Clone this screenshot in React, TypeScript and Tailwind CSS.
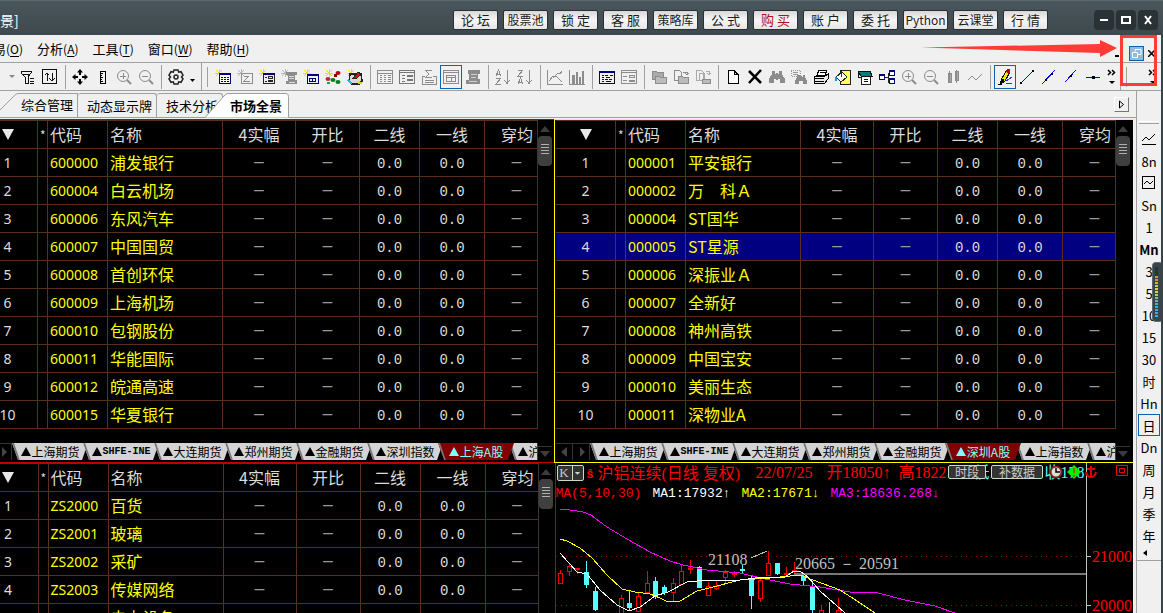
import type { ReactNode } from "react";
import { clsx } from "clsx";

/* ------------------------------------------------------------------ data */

const TITLE_LINKS = ["论 坛", "股票池", "锁 定", "客 服", "策略库", "公 式", "购 买", "账 户", "委 托", "Python", "云课堂", "行 情"];

const MENUS = [
  { label: "易", hotkey: "O" },
  { label: "分析", hotkey: "A" },
  { label: "工具", hotkey: "T" },
  { label: "窗口", hotkey: "W" },
  { label: "帮助", hotkey: "H" },
];

const SHANGHAI = [
  ["600000", "浦发银行"],
  ["600004", "白云机场"],
  ["600006", "东风汽车"],
  ["600007", "中国国贸"],
  ["600008", "首创环保"],
  ["600009", "上海机场"],
  ["600010", "包钢股份"],
  ["600011", "华能国际"],
  ["600012", "皖通高速"],
  ["600015", "华夏银行"],
];

const SHENZHEN = [
  ["000001", "平安银行"],
  ["000002", "万　科Ａ"],
  ["000004", "ST国华"],
  ["000005", "ST星源"],
  ["000006", "深振业Ａ"],
  ["000007", "全新好"],
  ["000008", "神州高铁"],
  ["000009", "中国宝安"],
  ["000010", "美丽生态"],
  ["000011", "深物业A"],
];

const SECTORS = [
  ["ZS2000", "百货"],
  ["ZS2001", "玻璃"],
  ["ZS2002", "采矿"],
  ["ZS2003", "传媒网络"],
  ["ZS2004", "电力设备"],
];

const LEFT_MARKETS = ["上海期货", "SHFE-INE", "大连期货", "郑州期货", "金融期货", "深圳指数", "上海A股", "沪期期权"];
const RIGHT_MARKETS = ["上海期货", "SHFE-INE", "大连期货", "郑州期货", "金融期货", "深圳A股", "上海指数", "沪期期权"];

/* ----------------------------------------------------------------- icons */

const G = "#8c8c8c";
const NAVY = "#000080";

const spark = <path d="M4 0v8M0 4h8M1 1l6 6M7 1L1 7" stroke="#e8e000" />;
const sparkOff = <path d="M4 0v8M0 4h8M1 1l6 6M7 1L1 7" stroke="#b8b8b8" />;
const magnifier = (
  <>
    <circle cx="7" cy="7" r="5.5" stroke={G} shapeRendering="auto" />
    <path d="M11 11l4 4" stroke={G} strokeWidth="2" shapeRendering="auto" />
  </>
);
const binoculars = (c: string) => (
  <path d="M3 2h3v3h1V4h2v1h1V2h3v3l3 5v4h-5v-4H9v1H7v-1H5v4H0v-4l3-5z" fill={c} stroke="none" />
);

const ICONS: Record<string, ReactNode> = {
  filter: <path d="M1 2h10v2L8 8v6H5V8L1 4zM10 9h4M10 12h4M10 14.500h4M3 5h6" stroke="#111" />,
  updown: <path d="M.5.5h14v14H.5zM5 12V4M2.500 6.500L5 4l2.500 2.500M10 4v8M7.500 9.500L10 12l2.500-2.500" stroke="#111" />,
  move: (
    <g fill="#000" stroke="none" shapeRendering="auto">
      <path d="M8 0l3 3.500H9V6H7V3.500H5zM8 16l3-3.500H9V10H7v2.500H5zM0 8l3.500-3v2H6v2H3.500v2zM16 8l-3.500-3v2H10v2h2.500v2z" />
    </g>
  ),
  ruler: <path d="M6 2h5v12H6zM6 4h3M6 6h2M6 8h3M6 10h2M6 12h3" stroke="#000" />,
  zoomIn: <>{magnifier}<path d="M4 7h6M7 4v6" stroke={G} /></>,
  zoomOut: <>{magnifier}<path d="M4 7h6" stroke={G} /></>,
  gear: (
    <g stroke="#222" strokeWidth="1.500" shapeRendering="auto">
      <path d="M6 1h4l.7 2.200 2.300-.5 2 3.400L13.500 8l1.500 1.900-2 3.400-2.300-.5L10 15H6l-.7-2.200-2.300.5-2-3.400L2.500 8 1 6.100l2-3.400 2.300.5z" />
      <circle cx="8" cy="8" r="2" />
    </g>
  ),
  newList: <>{spark}<path d="M4 4.500h11v10H4z" stroke={NAVY} fill="#fff" /><path d="M4 4h12v2H4z" fill={NAVY} stroke="none" /><path d="M6 8h2M9 8h2M12 8h2M6 10h2M9 10h2M12 10h2M6 12h2M9 12h2M12 12h2" stroke={NAVY} /></>,
  newZ: <>{sparkOff}<path d="M4 4.500h11v10H4zM7 7h5l-5 5h6" stroke={G} /></>,
  newForm: <>{spark}<path d="M4 4.500h11v10H4zM9 7.500h4v2H9zM9 11.500h4v1H9zM6 8h2M6 12h2" stroke="#222" /><path d="M4 4h12v2H4z" fill={NAVY} stroke="none" /></>,
  newScroll: <>{sparkOff}<path d="M5 3h11v3h-2v5h2v4H5v-3h2V6H5z" fill={G} stroke="none" /><path d="M8 7h5M8 9h5M8 13h6" stroke="#ddd" /></>,
  newWindow: <>{spark}<path d="M4 5.500h11v9H4zM6.500 9.500h6v3h-6zM9.500 9v4" stroke={NAVY} /><path d="M4 5h12v2H4z" fill={NAVY} stroke="none" /></>,
  palette: <>{spark}<g stroke="none" shapeRendering="auto"><ellipse cx="13" cy="4" rx="2.500" ry="2" fill="#c00010" /><path d="M9 5h3v3H9z" fill="#800" /><ellipse cx="3" cy="10" rx="2.500" ry="2" fill="#d02020" /><ellipse cx="8" cy="11" rx="2.500" ry="2" fill="#008020" /><ellipse cx="13" cy="13" rx="2.500" ry="2" fill="#008020" /><path d="M2 13h3v2H2z" fill="#00b040" /></g></>,
  alarm: <>{spark}<path d="M3 5h11l1 7-3 3H5l-3-3z" fill="#d8d8d8" stroke="#222" strokeWidth="1.500" /><path d="M6 9l5-6 3 2-4 4z" fill="#e01010" stroke="#222" /><path d="M1 11l4 4" stroke="#00c8d8" strokeWidth="2" /><path d="M11 14h4" stroke="#e0d000" strokeWidth="2" /></>,
  grid: <path d="M.5 1.500h15v13H.5zM.5 4h15M3 6h2M7 6h2M11 6h3M3 8h2M7 8h2M11 8h3M3 10h2M7 10h2M11 10h3M3 12h2M7 12h2M11 12h3" stroke={G} />,
  form: <path d="M.5 1.500h15v13H.5zM.5 3.500h15M3 6h3M3 9h3M3 12h3M8.500 6.500h5v1h-5zM8.500 10.500h5v1h-5z" stroke="#777" />,
  sigma: <path d="M1 7h3M12 7h3v8H1V7M11 1.500H5L8 5 5 8.500h6M4 11h9M4 13h9" stroke={G} />,
  layout: <path d="M.5 1.500h15v13H.5zM.5 3.500h15M3.500 6.500h9v2h-9zM3.500 9v3h9V9M8.500 9v3" stroke={G} />,
  scroll: <><path d="M3 1h12v4h-2v5h2v5H1v-4h3V5H3z" fill={G} stroke="none" /><path d="M6 5h6M6 8h5M4 12h8" stroke="#d0d0d0" /></>,
  sortAZ: <path d="M1 7l2.500-6L6 7M2 5h3M1 9h5l-5 6h5M12 1v13M9.500 11l2.500 3.500 2.500-3.500" stroke={G} />,
  sortZA: <path d="M1 1h5L1 7h5M1 15l2.500-6L6 15M2 13h3M12 1v13M9.500 11l2.500 3.500 2.500-3.500" stroke={G} />,
  chartLine: <path d="M.5 1v14H16M2 12l4-5h3l6 6M6 9l5-5 2 1 2-3" stroke={G} />,
  chartBar: <><path d="M.5 1v14H16" stroke={G} /><path d="M3 6h3v9H3zM7 3h2v12H7zM10 8h2v7h-2zM13 2h2v13h-2z" fill={G} stroke="none" /></>,
  tableBlue: <><path d="M.5 2.500h15v12H.5z" stroke="#111" /><path d="M0 2h16v2H0z" fill={NAVY} stroke="none" /><path d="M3 6h2M6 6h3M11 6h3M3 8h2M7 8h4M3 10h2M6 10h3M10 10h3M3 12h2M7 12h5" stroke="#111" /></>,
  tableGray: <path d="M.5 1.500h15v13H.5zM.5 3.500h15M2 7h4M2 11h4M8.500 6.500h5v2h-5zM8.500 11.500h5v1h-5z" stroke={G} />,
  folders: <><path d="M1 2h4l1 1h6v7H1z" fill="#aaa" stroke={G} /><path d="M4 7h4l1 1h6v6H4z" fill="#bbb" stroke={G} /></>,
  folderUp: <><path d="M1 1h5l2 2v8H1zM10 3h4v3M12 4l2 2 2-2" stroke={G} /><path d="M5 7h4l1 1h5v6H5z" fill="#bbb" stroke={G} /></>,
  folderDown: <><path d="M1 1h5l2 2v8H1zM4 4h5v7H4zM11 2h3v4M12 4l2 2 2-2" stroke="#aaa" /><path d="M7 10h8v4H7z" fill="#bbb" stroke={G} /></>,
  page: <path d="M3 1.500h6l4 4v9H3zM9 1.500v4h4" stroke="#000" fill="#fff" />,
  cross: <path d="M2 2l12 12M14 1L2 14" stroke="#000" strokeWidth="2.500" shapeRendering="auto" />,
  find: binoculars(G),
  findNext: <><path d="M0 1h9v6H0z" stroke="#999" strokeDasharray="1 1" /><path d="M2 3h5M2 5h5" stroke="#999" /><g transform="translate(4 4) scale(.75)">{binoculars(G)}</g></>,
  print: <><path d="M4 6l2-5h8l-2 5z" fill="#fff" stroke="#000" /><path d="M1 7h11l3-2v5l-3 4H1z" fill="#e8e8e8" stroke="#000" /><path d="M2 9h9M2 12h9M7 3h5" stroke="#000" /></>,
  fill: <><path d="M5 1h10v14H5z" fill="#ffff60" stroke="#222" /><path d="M1 8l6-5 5 5-6 5z" fill="#fff" stroke="#222" /><path d="M6 2v6" stroke="#0030c0" /><path d="M1 8v4" stroke="#00a0d0" strokeWidth="2" /></>,
  book: <><path d="M4 7h9v8H4z" fill="#fff" stroke="#222" /><path d="M1 2h12l2 5H4z" fill="#008078" stroke="#111" /><path d="M1 3v5h3M7 10h4M7 12h4" stroke="#111" /></>,
  nodes: <><path d="M5 8h4M9 4h2M9 4v9h2" stroke="#222" /><path d="M.5 5.500h5v5h-5zM10.500 1.500h5v5h-5zM10.500 9.500h5v5h-5z" fill="#fff" stroke={NAVY} /><path d="M0 5h6v2H0zM10 1h6v2h-6zM10 9h6v2h-6z" fill={NAVY} stroke="none" /></>,
  candles: <path d="M3 4h3v9H3zM10 2h3v9h-3zM4.500 2v12M11.500 1v13" stroke={G} fill="#aaa" />,
  wave: <path d="M1 11l4-4 4 4 6-6" stroke={G} shapeRendering="auto" />,
  pencil: <><path d="M5 9l5-8 3 2-5 9-4 3z" fill="#ffe800" stroke="#111" /><path d="M8 2l2-2h3v3l-1 2z" fill="#a01010" stroke="none" /><path d="M3 15l2-5 2 1zM1 15h4" fill="#000" stroke="#000" /><path d="M9 12l6-4M9 15l6-1" stroke="#2040d0" /></>,
  segment: <><path d="M2 14L14 2" stroke="#0000ff" /><path d="M1 13h2v2H1zM13 1h2v2h-2z" fill="#000" stroke="none" /></>,
  ray: <><path d="M1 15L14 1" stroke="#0000ff" /><path d="M4 10h2v2H4zM10 4h2v2h-2z" fill="#000" stroke="none" /></>,
  line: <><path d="M2 13L13 1" stroke="#0000ff" /><path d="M7 6h2v2H7z" fill="#000" stroke="none" /></>,
  hline: <><path d="M1 8.500h14" stroke="#0000ff" /><path d="M7 7h3v3H7z" fill="#000" stroke="none" /></>,
  trend: <path d="M1 10l4-4 3 3 6-6M1 13.500h14" stroke="#000" />,
  trendBox: <path d="M1.500 1.500h12v12h-12zM3 9l3-3 3 3 3-3" stroke="#000" />,
};

function Icon({ name }: { name: string }) {
  return (
    <svg width="16" height="16" viewBox="0 0 16 16" fill="none" shapeRendering="crispEdges" aria-hidden="true">
      {ICONS[name]}
    </svg>
  );
}

/* --------------------------------------------------------------- toolbar */

// "|" draws a separator between groups.
const TOOLS_A = ["filter", "updown", "|", "move", "ruler", "zoomIn", "zoomOut", "|", "gear"];
const TOOLS_B = [
  "newList", "newZ", "newForm", "newScroll", "newWindow", "palette", "alarm", "|",
  "grid", "form", "sigma", "layout", "scroll", "|",
  "sortAZ", "sortZA", "|", "chartLine", "chartBar", "|", "tableBlue", "tableGray", "|",
  "folders", "folderUp", "folderDown", "|",
  "page", "cross", "find", "findNext", "print", "fill", "book", "nodes", "zoomIn", "zoomOut", "candles", "wave", "|",
  "pencil", "segment", "ray", "line", "hline",
];
const PRESSED = ["layout", "pencil"];

function ToolGroup({ tools }: { tools: string[] }) {
  return (
    <>
      {tools.map((t, i) =>
        t === "|" ? (
          <span key={i} className="flex w-2 shrink-0 justify-center">
            <span className="h-6 w-px bg-[#a0a0a0]" />
          </span>
        ) : (
          <button
            key={i}
            aria-label={t}
            className={clsx(
              "flex h-6 w-[22px] shrink-0 items-center justify-center border",
              PRESSED.includes(t) ? "border-[#0a63b0]" : "border-transparent",
            )}
          >
            <Icon name={t} />
          </button>
        ),
      )}
    </>
  );
}

function Overflow() {
  return (
    <button aria-label="更多" className="flex h-6 w-4 shrink-0 items-center justify-center">
      <svg width="10" height="18" viewBox="0 0 10 18" fill="none" stroke="#000" strokeWidth="1.500" aria-hidden="true">
        <path d="M1 2l2.500 2.500L1 7M5 2l2.500 2.500L5 7" />
        <path d="M2 13h6l-3 3z" fill="#000" stroke="none" />
      </svg>
    </button>
  );
}

function Toolbar() {
  return (
    <div className="flex h-7 items-center overflow-hidden border-t border-[#a0a0a0]">
      <svg className="mr-[2px] ml-[9px] shrink-0" width="6" height="3" viewBox="0 0 6 3" aria-hidden="true">
        <path d="M0 0h6L3 3z" fill="#888" />
      </svg>
      <ToolGroup tools={TOOLS_A} />
      <svg className="mt-2 mr-1 ml-[3px] shrink-0" width="5" height="3" viewBox="0 0 5 3" aria-hidden="true">
        <path d="M0 0h5L2.500 3z" fill="#000" />
      </svg>
      <span className="mx-[2px] h-7 w-px shrink-0 bg-[#a0a0a0]" />
      <span className="mr-1 ml-[2px] h-5 w-[2px] shrink-0 border-r border-[#a0a0a0]" />
      <ToolGroup tools={TOOLS_B} />
      <Overflow />
      <span className="h-7 w-px shrink-0 bg-[#a0a0a0]" />
      <span className="ml-[5px] h-5 w-px shrink-0 bg-[#a0a0a0]" />
      <span className="ml-auto">
        <Overflow />
      </span>
    </div>
  );
}

/* ------------------------------------------------------------ title, menu */

function TitleBar() {
  return (
    <header className="flex h-[35px] items-center overflow-hidden border-t border-[#5b686e] bg-linear-to-b from-[#49565b] to-[#3e494e] pr-[5px] pt-1">
      <span className="mr-auto text-[14px] text-white">景]</span>
      <nav className="flex shrink-0 gap-[5px]">
        {TITLE_LINKS.map((t) => (
          <button
            key={t}
            className={clsx(
              "flex h-5 w-[45px] items-center justify-center rounded-[2px] border border-[#2a3135] bg-linear-to-b from-[#d8d8d8] via-[#f6f6f6] to-[#e6e6e6] whitespace-nowrap",
              t.includes(" ") ? "text-[13px]" : "text-[12px]",
              t === "购 买" ? "text-[#b01010]" : "text-[#1c1c1c]",
            )}
          >
            {t}
          </button>
        ))}
      </nav>
      <div className="ml-[46px] flex shrink-0 gap-[2px]">
        {["M6 10h8", "M6 7h8v6H6z", "M7 6l6 8M13 6l-6 8"].map((d) => (
          <button key={d} aria-label="窗口" className="rounded-[4px] bg-[#2b3236]">
            <svg width="20" height="20" viewBox="0 0 20 20" fill="none" stroke="#fff" strokeWidth="2" aria-hidden="true">
              <path d={d} />
            </svg>
          </button>
        ))}
      </div>
    </header>
  );
}

function MenuBar() {
  return (
    <div className="relative flex h-[27px] items-center">
      <nav className="-ml-[7px] flex gap-[14px] text-[13px]">
        {MENUS.map((m) => (
          <button key={m.hotkey} className="whitespace-nowrap">
            {m.label}
            <span className="text-[12px]">
              (<u className="underline-offset-2">{m.hotkey}</u>)
            </span>
          </button>
        ))}
      </nav>
      <div className="ml-auto flex items-center gap-1 pt-[10px] pr-[6px]">
        <button aria-label="最小化" className="mt-1 mr-[6px] h-[2px] w-1 bg-black" />
        <button aria-label="还原" className="border border-[#0a63b0] bg-[#8fbbe0]">
          <svg width="13" height="13" viewBox="0 0 13 13" fill="none" stroke="#fff" aria-hidden="true">
            <path d="M5 5V2.500h6v5H8M2.500 5.500h5v5h-5z" />
          </svg>
        </button>
        <button aria-label="关闭">
          <svg width="7" height="7" viewBox="0 0 7 7" stroke="#000" strokeWidth="1.500" aria-hidden="true">
            <path d="M0 0l7 7M7 0L0 7" />
          </svg>
        </button>
      </div>
      {/* call-out pointing at the restore button */}
      <svg className="absolute top-1 right-11" width="196" height="18" viewBox="0 0 196 18" aria-hidden="true">
        <path d="M0 8.500L179 5V1l17 8-17 9v-4z" fill="#ff3b36" />
      </svg>
      <div className="pointer-events-none absolute top-0 right-1 z-10 h-[51px] w-[37px] border-[3px] border-[#ff3b36]" />
    </div>
  );
}

function PageTabs() {
  return (
    <div className="flex h-[27px] items-end border-b border-[#a0a0a0] pr-[7px] text-[13px]">
      <button className="relative h-6 w-[78px] border-r border-[#a0a0a0] pl-[21px] text-left">
        <svg className="absolute top-0 left-0" width="78" height="24" viewBox="0 0 78 24" fill="none" stroke="#a0a0a0" aria-hidden="true">
          <path d="M0 17L14 3q2-2.500 4-2.500h60" />
        </svg>
        综合管理
      </button>
      <button className="h-6 w-[79px] rounded-t-[3px] border-t border-r border-[#a0a0a0] pl-[9px] text-left">动态显示牌</button>
      <button className="h-6 w-[66px] rounded-t-[3px] border-t border-r border-[#a0a0a0] pl-[9px] text-left whitespace-nowrap">
        技术分析
      </button>
      <button className="relative -mb-px -ml-[18px] h-[25px] w-[84px] pl-[25px] text-left font-bold">
        <svg className="absolute top-0 left-0" width="84" height="25" viewBox="0 0 84 25" fill="#fff" stroke="#a0a0a0" aria-hidden="true">
          <path d="M0 24.500L19 3q2-2.500 4-2.500h58q2.500 0 2.500 3v21" />
        </svg>
        <span className="relative">市场全景</span>
      </button>
      <button
        aria-label="下一页"
        className="mb-[5px] ml-auto flex h-[15px] w-[15px] items-center justify-center border-t border-r border-b border-l border-t-white border-r-[#777] border-b-[#777] border-l-white"
      >
        <svg width="7" height="9" viewBox="0 0 7 9" fill="none" stroke="#000" aria-hidden="true">
          <path d="M1.500 1v7l4-3.500z" />
        </svg>
      </button>
    </div>
  );
}

/* ----------------------------------------------------------------- quotes */

const CELL = "h-7 overflow-hidden border-r border-b border-[#5a2f1c] p-0 whitespace-nowrap";
const DASH = "pb-1 text-[12px] leading-[23px] font-bold text-[#999]";
const VALUE = "pt-[3px] text-center font-['Liberation_Mono',monospace] text-[14px] leading-6";

function QuoteTable({ rows, selected }: { rows: string[][]; selected?: string }) {
  return (
    <table className="w-[560px] table-fixed border-separate border-spacing-0 border-t border-[#5a2f1c] text-[16px] leading-[27px] text-[#dcdcdc]">
      <colgroup>
        <col className="w-[60px]" />
        <col className="w-[10px]" />
        <col className="w-[60px]" />
        <col className="w-[115px]" />
        <col className="w-[73px]" />
        <col className="w-[64px]" />
        <col className="w-[60px]" />
        <col className="w-[65px]" />
        <col className="w-[53px]" />
      </colgroup>
      <thead>
        <tr>
          <th className={CELL}>
            <svg className="mx-auto" width="12" height="11" viewBox="0 0 12 11" aria-label="排序">
              <path d="M0 0h12L6 11z" fill="#e8e8e8" />
            </svg>
          </th>
          <th className={clsx(CELL, "pl-[2px] text-left text-[12px] font-normal")}>*</th>
          <th className={clsx(CELL, "pl-[2px] text-left font-normal")}>代码</th>
          <th className={clsx(CELL, "pl-[2px] text-left font-normal")}>名称</th>
          <th className={clsx(CELL, "font-normal")}>4实幅</th>
          <th className={clsx(CELL, "font-normal")}>开比</th>
          <th className={clsx(CELL, "font-normal")}>二线</th>
          <th className={clsx(CELL, "font-normal")}>一线</th>
          <th className={clsx(CELL, "border-r-[#383838] pl-4 text-left font-normal")}>穿均</th>
        </tr>
      </thead>
      <tbody>
        {rows.map(([code, name], i) => (
          <tr key={code} className={clsx(code === selected && "bg-[#000080]")}>
            <td className={clsx(CELL, "text-center font-['Noto_Sans',sans-serif] text-[14px]")}>{i + 1}</td>
            <td className={CELL} />
            <td className={clsx(CELL, "pl-[2px] font-['Noto_Sans',sans-serif] text-[14px] text-[#ffff00]")}>{code}</td>
            <td className={clsx(CELL, "pl-[2px] text-[#ffff00]")}>{name}</td>
            <td className={clsx(CELL, DASH, "text-center")}>—</td>
            <td className={clsx(CELL, DASH, "text-center")}>—</td>
            <td className={clsx(CELL, VALUE)}>0.0</td>
            <td className={clsx(CELL, VALUE)}>0.0</td>
            <td className={clsx(CELL, DASH, "border-r-[#383838] pl-[26px]")}>—</td>
          </tr>
        ))}
      </tbody>
    </table>
  );
}

function ScrollRail({ end = true }: { end?: boolean }) {
  return (
    <div className="flex w-4 shrink-0 flex-col items-center pr-[2px]">
      <svg className="mt-[6px]" width="10" height="6" viewBox="0 0 10 6" aria-hidden="true">
        <path d="M0 6h10L5 0z" fill="#3c3c3c" />
      </svg>
      <div className="mt-1 flex h-[30px] w-[14px] flex-col items-center gap-[2px] rounded-[4px] bg-[#3f3f3f] pt-2">
        {[0, 1, 2, 3].map((n) => (
          <span key={n} className="h-px w-2 bg-[#b0b0b0]" />
        ))}
      </div>
      {end && (
        <div className="mt-auto flex h-4 w-full shrink-0 justify-center border-t border-[#333] pt-1">
          <svg width="10" height="6" viewBox="0 0 10 6" aria-hidden="true">
            <path d="M0 0h10L5 6z" fill="#3c3c3c" />
          </svg>
        </div>
      )}
    </div>
  );
}

function MarketTabs({ markets, active }: { markets: string[]; active: string }) {
  return (
    <div className="mt-[14px] mb-[2px] flex h-[17px] w-[560px] overflow-hidden border-r border-[#383838] text-[12px] leading-[17px]">
      {["M7 3v10L1 8z", "M3 3v10l5-5z"].map((d) => (
        <button key={d} aria-label="滚动" className="w-[17px] shrink-0 border-t border-r border-[#333]">
          <svg className="mx-auto" width="9" height="16" viewBox="0 0 9 16" aria-hidden="true">
            <path d={d} fill="#444" />
          </svg>
        </button>
      ))}
      {markets.map((m) => (
        <button
          key={m}
          className={clsx(
            "relative -mr-[5px] flex w-[76px] shrink-0 items-center justify-center whitespace-nowrap [clip-path:polygon(0_0,100%_0,calc(100%-6px)_100%,6px_100%)] before:absolute before:top-0 before:left-0 before:h-full before:w-[2px] before:origin-top before:skew-x-[19deg] before:bg-[#777]",
            m === active ? "z-10 bg-[#800000] text-[#7fffff]" : "bg-[#d4d4d4] text-black",
          )}
        >
          <svg className="mr-px shrink-0" width="10" height="9" viewBox="0 0 10 9" aria-hidden="true">
            <path d="M0 9h10L5 0z" fill="currentColor" />
          </svg>
          {m === "SHFE-INE" ? (
            <span className="font-['Liberation_Mono',monospace] text-[10px] font-bold">{m}</span>
          ) : (
            m
          )}
        </button>
      ))}
    </div>
  );
}

/* ------------------------------------------------------------------ chart */

// [x, body top, body bottom, wick top, wick bottom, rising]
type Candle = [number, number, number, number, number, boolean];

const CANDLES: Candle[] = [
  [558, 573, 584, 570, 584, true],
  [567, 566, 572, 563, 576, true],
  [575, 568, 569, 568, 574, true],
  [584, 572, 585, 561, 588, false],
  [593, 591, 610, 587, 611, false],
  [619, 598, 614, 595, 614, true],
  [627, 603, 608, 590, 610, false],
  [636, 596, 612, 593, 612, true],
  [645, 583, 593, 571, 593, true],
  [653, 581, 596, 577, 599, false],
  [662, 587, 593, 585, 595, false],
  [671, 583, 593, 578, 602, true],
  [679, 571, 585, 565, 585, true],
  [688, 568, 570, 560, 574, true],
  [697, 567, 588, 566, 588, false],
  [706, 586, 596, 582, 596, true],
  [714, 586, 589, 580, 590, true],
  [723, 572, 578, 570, 583, true],
  [732, 573, 575, 571, 577, true],
  [740, 569, 571, 565, 574, false],
  [749, 578, 596, 575, 609, false],
  [758, 580, 599, 579, 602, true],
  [766, 563, 576, 551, 576, true],
  [775, 563, 574, 563, 575, false],
  [784, 573, 575, 567, 577, true],
  [792, 570, 572, 562, 573, true],
  [801, 576, 581, 575, 586, false],
  [810, 587, 610, 583, 614, false],
  [819, 610, 616, 605, 616, true],
  [827, 614, 616, 602, 616, false],
  [836, 610, 616, 598, 616, true],
];

function Chart() {
  return (
    <svg
      className="absolute top-0 left-0"
      width="577"
      height="150"
      viewBox="556 463 577 150"
      fill="none"
      shapeRendering="crispEdges"
      aria-hidden="true"
    >
      <path d="M556 556.500h530M556 605.500h530" stroke="#a00000" strokeDasharray="1 4" />
      {CANDLES.map(([x, top, bottom, high, low, up]) => (
        <g key={x} stroke={up ? "#ff0000" : "#54ffff"}>
          <path d={`M${x + 2.5} ${high}V${top}M${x + 2.5} ${bottom}V${low}`} />
          <rect x={x + 0.5} y={top + 0.5} width="4" height={bottom - top - 1 || 1} fill={up ? "#000" : "#54ffff"} />
        </g>
      ))}
      <path d="M794 574h292" stroke="#777" strokeWidth="2" />
      <path stroke="#ff00ff" d="M560 509l10 1 13 2 8 3 16 12 20 12 23 13 20 9 13 4 24 5 33 3 25 6 25 5 30 3 30 5 28 1 27 7 30 6 20 7" />
      <path stroke="#ffff00" d="M560 539l7 2 13 7 12 10 15 17 15 14 13 3 15 2 10 4 8 4 12-1 17-10 16-4 27-7 30-2 30-3 13 5 27 10 17 11 18 12" />
      <path stroke="#fff" d="M560 553l17 19 10 2 13 16 17 15 12 6 11-4 15-11 13-4 19-10 20-2 33 0 23-3 22 0 9-6 7 1 7 5 12 14 25 22" />
      <path d="M751 558l16-7M1086.500 463v150M1087 556.500h4M1087 605.500h4" stroke="#b8c8b0" />
      <g className="font-['Liberation_Serif',serif] text-[16px]" stroke="none">
        <text x="708" y="565" fill="#c0c0c0">21108</text>
        <text x="795" y="569" fill="#c0c0c0">20665 － 20591</text>
        <text x="1092" y="562" fill="#ff0000">21000</text>
        <text x="1092" y="611" fill="#ff0000">20000</text>
      </g>
    </svg>
  );
}

function ChartPane() {
  return (
    <section className="relative min-w-0 flex-[578] overflow-hidden border-l border-[#c00000] bg-black">
      <Chart />
      <div className="relative flex h-5 items-center text-[16px] whitespace-nowrap text-[#ff0000]">
        <button className="mr-[3px] ml-px flex h-4 w-[27px] shrink-0 items-center justify-around rounded-[2px] border border-[#c8dcc0] bg-[#333] font-['Liberation_Serif',serif] text-[13px] text-[#ccc]">
          K
          <svg className="h-full border-l border-[#c8dcc0]" width="9" height="14" viewBox="0 0 9 14" aria-hidden="true">
            <path d="M2 6h6L5 9z" fill="#c8dcc0" />
          </svg>
        </button>
        <span className="w-[11px] shrink-0 text-[12px] font-bold">ŝ</span>
        <span className="w-[158px] shrink-0">
          沪铝连续<span className="font-['Liberation_Serif','Noto_Sans_CJK_SC',serif]">(日线 复权)</span>
        </span>
        <span className="w-[71px] shrink-0 font-['Liberation_Serif',serif]">22/07/25</span>
        <span className="w-[72px] shrink-0 font-['Liberation_Serif','Noto_Sans_CJK_SC',serif]">开18050↑</span>
        <span className="w-[75px] shrink-0 font-['Liberation_Serif','Noto_Sans_CJK_SC',serif]">高18225↑</span>
        <span className="w-[71px] shrink-0 font-['Liberation_Serif','Noto_Sans_CJK_SC',serif] text-[#54ffff]">低18010↑</span>
        <span className="font-['Liberation_Serif','Noto_Sans_CJK_SC',serif] text-[#54ffff]">收178</span>
      </div>
      <div className="relative flex font-['Liberation_Mono','Noto_Sans_CJK_SC',monospace] text-[13px] leading-[22px] whitespace-nowrap">
        <span className="w-[97px] shrink-0 text-[#ff0000]">MA(5,10,30)</span>
        <span className="w-[89px] shrink-0 text-white">MA1:17932↑</span>
        <span className="w-[89px] shrink-0 text-[#ffff00]">MA2:17671↓</span>
        <span className="text-[#ff00ff]">MA3:18636.268↓</span>
      </div>
      {/* floating actions over the price line */}
      <div className="absolute top-[2px] right-[5px] flex items-center text-[12px] leading-[12px] text-[#ccc]">
        <button className="mr-[5px] h-[14px] w-[38px] rounded-[2px] border border-[#c8dcc0] bg-[#333]">时段</button>
        <button className="mr-[6px] h-[14px] w-[52px] rounded-[2px] border border-[#c8dcc0] bg-[#333]">补数据</button>
        <svg width="79" height="14" viewBox="0 0 79 14" fill="none" aria-hidden="true">
          <circle cx="7" cy="7" r="5.500" fill="#ddd" stroke="#802020" strokeWidth="2" />
          <path d="M7 3v4h4" stroke="#000" strokeWidth="1.500" />
          <path d="M25 0l7 7-7 7-7-7z" fill="#00f000" />
          <path d="M25 3v5M25 10v2" stroke="#a06000" strokeWidth="2" />
          <path d="M42 1v10M38 4h8M37 7q1 5 5 5t5-5" stroke="#e00000" strokeWidth="2" />
          <path d="M67.500.500h11v10h-11zM70.500 3.500h5v4h-5z" stroke="#ff0000" />
        </svg>
      </div>
    </section>
  );
}

/* ---------------------------------------------------------------- periods */

const PERIODS = ["trend", "8n", "trendBox", "Sn", "1", "Mn", "3", "5", "10", "15", "30", "时", "Hn", "日", "Dn", "周", "月", "季", "年"];

// Level meter, top to bottom.
const LEVELS = ["#e89020", "#e89020", "#e8a820", "#e8c030", "#e0d040", "#d8d840", "#a8d068", "#70c898", "#50c0c0", "#38b8d8", "#30b0e8", "#30b0f0", "#30b0f0", "#30b0f0"];

function PeriodBar() {
  return (
    <aside className="relative w-[25px] shrink-0 border-l border-[#a0a0a0]">
      <div className="flex flex-col items-center border-b border-[#a0a0a0] pt-[30px]">
        <span className="mb-1 h-[3px] w-5 border-t border-b border-t-white border-b-[#a0a0a0]" />
        {PERIODS.map((p) => (
          <button
            key={p}
            className={clsx(
              "flex h-[22px] w-[22px] items-center justify-center border text-[13px] leading-none",
              p === "日" ? "border-[#0a63b0]" : "border-transparent",
              p === "Mn" && "font-bold",
            )}
          >
            {p in ICONS ? <Icon name={p} /> : p}
          </button>
        ))}
        <svg className="mt-1 mr-2 mb-1" width="4" height="6" viewBox="0 0 4 6" aria-hidden="true">
          <path d="M4 0v6L0 3z" fill="#000" />
        </svg>
      </div>
      <svg className="absolute top-[171px] right-0" width="9" height="60" viewBox="0 0 9 60" aria-hidden="true">
        <rect x=".5" y=".5" width="10" height="59" rx="3" fill="#3a454b" stroke="#5b686e" />
        <path d="M3 5h3v9H3z" fill="#2a3338" />
        {LEVELS.map((c, i) => (
          <rect key={i} x="3" y={14 + i * 3} width="3" height="2" fill={c} />
        ))}
      </svg>
    </aside>
  );
}

/* -------------------------------------------------------------------- app */

export default function App() {
  return (
    <div className="flex h-screen flex-col overflow-hidden bg-[#f0f0f0] font-['Noto_Sans_CJK_SC',sans-serif] text-black">
      <TitleBar />
      <div className="flex min-h-0 flex-1 flex-col border-r-2 border-[#37454b]">
        <MenuBar />
        <Toolbar />
        <div className="flex min-h-0 flex-1 border-t border-[#a0a0a0]">
          <main className="flex min-w-0 flex-1 flex-col">
            <PageTabs />
            <div className="mt-px mr-[3px] flex min-h-0 flex-1 flex-col bg-black">
              <div className="flex">
                <section className="flex min-w-0 flex-[555] justify-end overflow-hidden border-t border-b border-[#c00000]">
                  <div className="shrink-0">
                    <QuoteTable rows={SHANGHAI} />
                    <MarketTabs markets={LEFT_MARKETS} active="上海A股" />
                  </div>
                  <ScrollRail />
                </section>
                <section className="flex min-w-0 flex-[578] overflow-hidden border border-r-0 border-[#ffff00] pl-px">
                  <div className="shrink-0">
                    <QuoteTable rows={SHENZHEN} selected="000005" />
                    <MarketTabs markets={RIGHT_MARKETS} active="深圳A股" />
                  </div>
                  <ScrollRail />
                </section>
              </div>
              <div className="flex min-h-0 flex-1">
                <section className="flex min-w-0 flex-[555] justify-end overflow-hidden">
                  <div className="shrink-0">
                    <QuoteTable rows={SECTORS} />
                  </div>
                  <ScrollRail end={false} />
                </section>
                <ChartPane />
              </div>
            </div>
          </main>
          <PeriodBar />
        </div>
      </div>
    </div>
  );
}
